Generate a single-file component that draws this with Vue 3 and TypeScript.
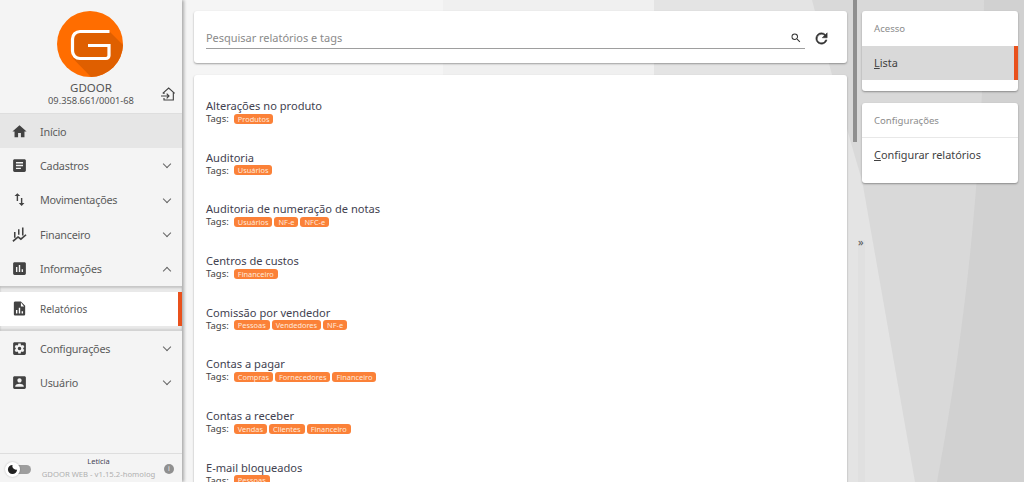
<script setup lang="ts">
interface MenuItem {
  label: string;
  icon: string;
  open?: boolean;
}

const menuTop: MenuItem[] = [
  { label: 'Cadastros', icon: 'M19 3H5c-1.1 0-2 .9-2 2v14c0 1.1.9 2 2 2h14c1.1 0 2-.9 2-2V5c0-1.1-.9-2-2-2zm-5 14H7v-2h7v2zm3-4H7v-2h10v2zm0-4H7V7h10v2z' },
  { label: 'Movimentações', icon: 'M16 17.01V10h-2v7.01h-3L15 21l4-3.99h-3zM9 3L5 6.99h3V14h2V6.99h3L9 3z' },
  { label: 'Financeiro', icon: 'M4.2 8.5h2.2v8H4.2zM9.9 4.5H12v8H9.9zM15.5 2h2.2v11.5h-2.2zM2 20.5 9.9 14l4.1 3 6.5-5.5 1.5 1.5-8 7-4-3-6.6 5.5z' },
  { label: 'Informações', icon: 'M19 3H5c-1.1 0-2 .9-2 2v14c0 1.1.9 2 2 2h14c1.1 0 2-.9 2-2V5c0-1.1-.9-2-2-2zM9 17H7v-7h2v7zm4 0h-2V7h2v10zm4 0h-2v-4h2v4z', open: true }
];

const menuBottom: MenuItem[] = [
  { label: 'Configurações', icon: 'M19 3H5c-1.11 0-2 .9-2 2v14c0 1.1.89 2 2 2h14c1.11 0 2-.9 2-2V5c0-1.1-.89-2-2-2zm-1.75 9c0 .23-.02.46-.05.68l1.48 1.16c.13.11.17.3.08.45l-1.4 2.42c-.09.15-.27.21-.43.15l-1.74-.7c-.36.28-.76.51-1.18.69l-.26 1.85c-.03.17-.18.3-.35.3h-2.8c-.17 0-.32-.13-.35-.29l-.26-1.85c-.43-.18-.82-.41-1.18-.69l-1.74.7c-.16.06-.34 0-.43-.15l-1.4-2.42c-.09-.15-.05-.34.08-.45l1.48-1.16c-.03-.23-.05-.46-.05-.69 0-.23.02-.46.05-.68l-1.48-1.16c-.13-.11-.17-.3-.08-.45l1.4-2.42c.09-.15.27-.21.43-.15l1.74.7c.36-.28.76-.51 1.18-.69l.26-1.85c.03-.17.18-.3.35-.3h2.8c.17 0 .32.13.35.29l.26 1.85c.43.18.82.41 1.18.69l1.74-.7c.16-.06.34 0 .43.15l1.4 2.42c.09.15.05.34-.08.45l-1.48 1.16c.03.23.05.46.05.69zM12 9.5a2.5 2.5 0 1 0 0 5 2.5 2.5 0 0 0 0-5z' },
  { label: 'Usuário', icon: 'M3 5v14c0 1.1.89 2 2 2h14c1.1 0 2-.9 2-2V5c0-1.1-.9-2-2-2H5c-1.11 0-2 .9-2 2zm12 4c0 1.66-1.34 3-3 3s-3-1.34-3-3 1.34-3 3-3 3 1.34 3 3zm-9 8c0-2 4-3.1 6-3.1s6 1.1 6 3.1v1H6v-1z' }
];

const reports = [
  { name: 'Alterações no produto', tags: ['Produtos'] },
  { name: 'Auditoria', tags: ['Usuários'] },
  { name: 'Auditoria de numeração de notas', tags: ['Usuários', 'NF-e', 'NFC-e'] },
  { name: 'Centros de custos', tags: ['Financeiro'] },
  { name: 'Comissão por vendedor', tags: ['Pessoas', 'Vendedores', 'NF-e'] },
  { name: 'Contas a pagar', tags: ['Compras', 'Fornecedores', 'Financeiro'] },
  { name: 'Contas a receber', tags: ['Vendas', 'Clientes', 'Financeiro'] },
  { name: 'E-mail bloqueados', tags: ['Pessoas'] }
];
</script>

<template>
  <div class="page">
    <svg class="backdrop" viewBox="0 0 1024 482" preserveAspectRatio="none" aria-hidden="true">
      <rect width="1024" height="482" fill="#f5f5f5" />
      <rect x="443" width="581" height="482" fill="#f0f0f0" />
      <rect x="654" width="370" height="482" fill="#e4e4e4" />
      <path d="M812,0 Q845,125 862,180 L915,482 L1024,482 L1024,0 Z" fill="#d9d9d9" />
      <path d="M984,0 C984,180 960,360 937,482 L1024,482 L1024,0 Z" fill="#d1d1d1" />
      <rect x="858" y="240" width="7" height="242" fill="#000" opacity="0.015" />
    </svg>

    <aside class="sidebar">
      <div class="profile">
        <svg class="logo" viewBox="0 0 66 66">
          <circle cx="33" cy="33" r="33" fill="#ff6d00" />
          <path d="M52.5 20.5 66 34A33 33 0 0 1 34 66L15.5 47V28q0-7.5 7.5-7.5z" fill="#df5f00" />
          <path d="M52.5 20.5H23a7.5 7.5 0 0 0-7.5 7.5v12a7.5 7.5 0 0 0 7.5 7.5h26a3 3 0 0 0 3-3V34.5H31" fill="none" stroke="#fff" stroke-width="3.2" />
        </svg>
        <div class="company">GDOOR</div>
        <div class="cnpj">09.358.661/0001-68</div>
        <svg class="switch-company" viewBox="0 0 24 24">
          <path d="M4 11 13 3l9 8M20 9.5V21H6v-3M6 9.5V12" fill="none" stroke="#424242" stroke-width="1.7" />
          <path d="M1.5 15H13M10 11.5l3.5 3.5-3.5 3.5" fill="none" stroke="#424242" stroke-width="1.7" />
        </svg>
      </div>

      <nav class="menu">
        <a class="menu-item home">
          <svg viewBox="0 0 24 24"><path d="M10 20v-6h4v6h5v-8h3L12 3 2 12h3v8z" /></svg>
          <span>Início</span>
        </a>
        <a v-for="item in menuTop" :key="item.label" class="menu-item">
          <svg viewBox="0 0 24 24"><path :d="item.icon" /></svg>
          <span>{{ item.label }}</span>
          <i class="chevron" :class="{ up: item.open }"></i>
        </a>
        <div class="submenu">
          <a class="menu-item sub-active">
            <svg viewBox="0 0 24 24"><path d="M14 2H6c-1.1 0-2 .9-2 2v16c0 1.1.9 2 2 2h12c1.1 0 2-.9 2-2V8l-6-6zM9 19H7v-5h2v5zm4 0h-2v-8h2v8zm4 0h-2v-3h2v3zm-3-10V3.5L18.5 9H14z" /></svg>
            <span>Relatórios</span>
          </a>
        </div>
        <a v-for="item in menuBottom" :key="item.label" class="menu-item">
          <svg viewBox="0 0 24 24"><path :d="item.icon" fill-rule="evenodd" /></svg>
          <span>{{ item.label }}</span>
          <i class="chevron"></i>
        </a>
      </nav>

      <footer class="side-footer">
        <div class="theme-toggle">
          <span class="toggle-knob">
            <svg viewBox="0 0 24 24"><path d="M12 2a10 10 0 1 0 10 10 8 8 0 0 1-10-10z" /></svg>
          </span>
        </div>
        <div class="user-info">
          <div class="user-name">Letícia</div>
          <div class="version">GDOOR WEB - v1.15.2-homolog</div>
        </div>
        <span class="info-dot">i</span>
      </footer>
    </aside>

    <main class="content">
      <section class="card search-card">
        <div class="search-field">
          <span class="placeholder">Pesquisar relatórios e tags</span>
          <svg class="search-icon" viewBox="0 0 24 24"><path d="M15.5 14h-.79l-.28-.27A6.47 6.47 0 0 0 16 9.5 6.5 6.5 0 1 0 9.5 16c1.61 0 3.09-.59 4.23-1.57l.27.28v.79l5 4.99L20.49 19l-4.99-5zm-6 0C7.01 14 5 11.99 5 9.5S7.01 5 9.5 5 14 7.01 14 9.5 11.99 14 9.5 14z" /></svg>
        </div>
        <svg class="refresh-icon" viewBox="0 0 24 24"><path d="M17.65 6.35A7.96 7.96 0 0 0 12 4a8 8 0 1 0 7.73 10h-2.08A6 6 0 1 1 12 6c1.66 0 3.14.69 4.22 1.78L13 11h7V4l-2.35 2.35z" /></svg>
      </section>

      <section class="card report-list">
        <div v-for="report in reports" :key="report.name" class="report">
          <div class="report-name">{{ report.name }}</div>
          <div class="report-tags">
            <span class="tags-label">Tags:</span>
            <span v-for="tag in report.tags" :key="tag" class="tag">{{ tag }}</span>
          </div>
        </div>
      </section>
    </main>

    <div class="scrollbar"></div>

    <div class="collapse">»</div>

    <aside class="right-panel">
      <section class="card side-card">
        <div class="side-title">Acesso</div>
        <div class="side-link active"><span class="first">L</span>ista</div>
        <div class="side-spacer"></div>
      </section>
      <section class="card side-card">
        <div class="side-title ruled">Configurações</div>
        <div class="side-link"><span class="first">C</span>onfigurar relatórios</div>
        <div class="side-spacer"></div>
      </section>
    </aside>
  </div>
</template>

<style>
html, body {
  margin: 0;
  height: 100%;
  overflow: hidden;
}
</style>

<style scoped>
.page {
  position: relative;
  display: flex;
  width: 1024px;
  height: 482px;
  overflow: hidden;
  font-family: 'Noto Sans', 'Open Sans', sans-serif;
  color: #424242;
}

.backdrop {
  position: absolute;
  inset: 0;
  width: 100%;
  height: 100%;
}

/* --- Sidebar --- */
.sidebar {
  position: relative;
  z-index: 2;
  display: flex;
  flex-direction: column;
  flex: none;
  width: 182px;
  height: 482px;
  background: #f4f4f4;
  box-shadow: 2px 0 3px rgba(0, 0, 0, 0.3);
}

.profile {
  position: relative;
  height: 114px;
  box-sizing: border-box;
  padding-top: 11px;
  text-align: center;
  border-bottom: 1px solid #dedede;
}

.logo {
  display: block;
  width: 66px;
  height: 66px;
  margin: 0 0 3px 57px;
}

.company {
  font-size: 11.5px;
  line-height: 15px;
  color: #555;
}

.cnpj {
  font-size: 9.3px;
  line-height: 12px;
  color: #555;
}

.switch-company {
  position: absolute;
  right: 6px;
  top: 86px;
  width: 16px;
  height: 16px;
}

.menu {
  flex: 1;
}

.menu-item {
  position: relative;
  display: flex;
  align-items: center;
  height: 34.4px;
  padding-left: 11px;
  font-size: 10.8px;
  letter-spacing: -0.22px;
  color: #5c5c5c;
}

.menu-item svg {
  flex: none;
  width: 17px;
  height: 17px;
  margin-right: 12px;
  fill: #424242;
}

.home {
  background: #e6e6e6;
}

.chevron {
  position: absolute;
  right: 12px;
  top: 13px;
  width: 5px;
  height: 5px;
  border-right: 1.3px solid #666;
  border-bottom: 1.3px solid #666;
  transform: rotate(45deg);
}

.chevron.up {
  top: 16px;
  transform: rotate(225deg);
}

.submenu {
  background: #e9e9e9;
  padding: 6px 0 5px;
  box-shadow: inset 0 2px 2px rgba(0, 0, 0, 0.15), inset 0 -2px 2px rgba(0, 0, 0, 0.1);
}

.sub-active {
  height: 34px;
  background: #fff;
  border-right: 4px solid #e9511c;
  font-size: 10px;
  letter-spacing: 0;
}

.side-footer {
  display: flex;
  align-items: center;
  height: 28px;
  padding: 0 8px 0 5px;
  border-top: 1px solid #dedede;
}

.theme-toggle {
  position: relative;
  flex: none;
  width: 20px;
  height: 9px;
  margin: 2px 0 0 6px;
  border-radius: 5px;
  background: #9e9e9e;
}

.toggle-knob {
  position: absolute;
  left: -6px;
  top: -3px;
  width: 15px;
  height: 15px;
  border-radius: 50%;
  background: #fff;
  box-shadow: 0 0 2px rgba(0, 0, 0, 0.25);
}

.toggle-knob svg {
  display: block;
  width: 11px;
  height: 11px;
  margin: 2px;
  fill: #222;
}

.user-info {
  flex: 1;
  padding-left: 2px;
  text-align: center;
  line-height: 13px;
}

.user-name {
  font-size: 7.5px;
  color: #445;
}

.version {
  font-size: 7.7px;
  color: #b0b0b0;
  white-space: nowrap;
}

.info-dot {
  flex: none;
  width: 10px;
  height: 10px;
  margin-top: 2px;
  border-radius: 50%;
  background: #909090;
  color: #eee;
  font-size: 7px;
  line-height: 10px;
  text-align: center;
}

/* --- Main column --- */
.card {
  background: #fff;
  border-radius: 3px;
  box-shadow: 0 1px 2px rgba(0, 0, 0, 0.35);
}

.content {
  position: relative;
  z-index: 1;
  display: flex;
  flex-direction: column;
  flex: none;
  gap: 12px;
  width: 653px;
  margin-left: 12px;
  padding-top: 11px;
}

.search-card {
  display: flex;
  align-items: center;
  flex: none;
  height: 52px;
  box-sizing: border-box;
  padding: 0 17px 0 12px;
}

.search-field {
  display: flex;
  align-items: center;
  justify-content: space-between;
  flex: 1;
  height: 22px;
  margin-top: 1px;
  border-bottom: 1px solid #9e9e9e;
  color: #8a8a8a;
  font-size: 11px;
  letter-spacing: -0.03px;
}

.search-icon {
  width: 12px;
  height: 12px;
  margin: 2px 3px 0 0;
  fill: #333;
}

.refresh-icon {
  flex: none;
  width: 17px;
  height: 17px;
  margin: 2px 0 0 8px;
  fill: #333;
  stroke: #333;
  stroke-width: 0.7;
}

.report-list {
  flex: 1;
  padding: 19px 12px 0;
  border-radius: 3px 3px 0 0;
}

.report {
  height: 51.7px;
  padding-top: 4px;
  box-sizing: border-box;
}

.report-name {
  font-size: 11.1px;
  line-height: 15px;
  color: #424250;
}

.report-tags {
  display: flex;
  align-items: center;
  gap: 2px;
  height: 11px;
}

.tags-label {
  margin-right: 3px;
  font-size: 9.5px;
  color: #424242;
}

.tag {
  padding: 0 4px;
  border-radius: 3px;
  background: #fb8138;
  color: #ffe9dc;
  font-size: 7.4px;
  line-height: 10px;
  white-space: nowrap;
}

.scrollbar {
  position: absolute;
  z-index: 3;
  left: 853px;
  top: 0;
  width: 4px;
  height: 142px;
  background: #8f8f8f;
}

.collapse {
  position: absolute;
  z-index: 1;
  left: 858px;
  top: 235px;
  font-size: 11px;
  line-height: 14px;
  color: #555;
}

/* --- Right panel --- */
.right-panel {
  position: absolute;
  z-index: 1;
  left: 862px;
  top: 11px;
  display: flex;
  flex-direction: column;
  gap: 12px;
  width: 156px;
}

.side-title {
  height: 35px;
  padding-left: 12px;
  font-size: 9.6px;
  line-height: 36px;
  color: #8c8c8c;
}

.side-title.ruled {
  height: 34px;
  border-bottom: 1px solid #e8e8e8;
}

.side-link {
  position: relative;
  height: 34px;
  padding-left: 12px;
  font-size: 10.9px;
  line-height: 33px;
  color: #424242;
}

.side-link.active {
  background: #d9d9d9;
  border-right: 4px solid #e9511c;
}

.first {
  text-decoration: underline;
}

.side-spacer {
  height: 11px;
}
</style>
